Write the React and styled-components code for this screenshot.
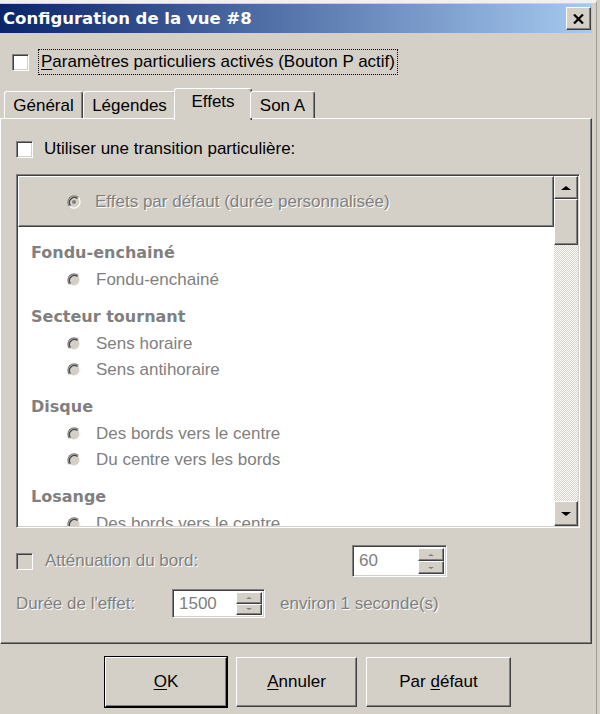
import React from "react"
import styled, { createGlobalStyle } from "styled-components"

const face = "#d4d0c8"
const shade = "#808080"
const dark = "#404040"

const GlobalStyle = createGlobalStyle`
  html, body {
    margin: 0;
    padding: 0;
    background: ${face};
  }
  body {
    font-family: "Liberation Sans", Arial, sans-serif;
    font-size: 17px;
    color: #000;
  }
`

const Window = styled.div`
  width: 597px;
  height: 714px;
  box-sizing: border-box;
  border-top: 3px solid #f1f0ed;
  border-right: 1px solid #a09c94;
  padding-top: 1px;
  background: ${face};
  display: flex;
  flex-direction: column;
  overflow: hidden;
`

const TitleBar = styled.div`
  height: 29px;
  margin-right: 4px;
  padding: 0 1px 0 3px;
  display: flex;
  align-items: center;
  justify-content: space-between;
  background: linear-gradient(to right, #0a246a 0%, #a6caf0 100%);
`

const TitleText = styled.span`
  color: #fff;
  font-family: "DejaVu Sans", Verdana, sans-serif;
  font-weight: bold;
  font-size: 16.5px;
`

const Raised = styled.div`
  box-sizing: border-box;
  background: ${face};
  border-top: 1px solid #fff;
  border-left: 1px solid #fff;
  border-right: 1px solid ${dark};
  border-bottom: 1px solid ${dark};
  box-shadow: inset -1px -1px 0 ${shade};
`

const CloseButton = styled(Raised)`
  width: 25px;
  height: 23px;
  display: flex;
  align-items: center;
  justify-content: center;
`

const TopCheckRow = styled.div`
  display: flex;
  align-items: center;
  gap: 9px;
  height: 26px;
  margin: 16px 0 0 12px;
`

const FocusLabel = styled.span`
  border: 1px dotted #000;
  padding: 0 2px;
  line-height: 24px;
`

const Box = styled.span`
  width: 17px;
  height: 17px;
  flex: none;
  box-sizing: border-box;
  background: ${({ $disabled }) => ($disabled ? face : "#fff")};
  border-top: 1px solid ${shade};
  border-left: 1px solid ${shade};
  border-right: 1px solid #fff;
  border-bottom: 1px solid #fff;
  box-shadow: inset 1px 1px 0 ${dark}, inset -1px -1px 0 ${face};
`

const TabRow = styled.div`
  display: flex;
  align-items: flex-end;
  height: 30px;
  margin: 13px 0 0 4px;
  position: relative;
  z-index: 1;
`

const Tab = styled.div`
  box-sizing: border-box;
  width: ${({ $w }) => $w}px;
  height: ${({ $active }) => ($active ? 32 : 27)}px;
  margin: 0 ${({ $active }) => ($active ? -2 : 0)}px
    ${({ $active }) => ($active ? -2 : 0)}px;
  padding-top: ${({ $active }) => ($active ? 2 : 3)}px;
  text-align: center;
  background: ${face};
  border-top: 1px solid #fff;
  border-left: 1px solid #fff;
  border-right: 1px solid ${dark};
  border-radius: 3px 3px 0 0;
  box-shadow: inset -1px 0 0 ${shade};
  line-height: 22px;
`

const Panel = styled.div`
  width: 592px;
  height: 526px;
  box-sizing: border-box;
  border-top: 1px solid #fff;
  border-left: 1px solid #fff;
  border-right: 1px solid ${dark};
  border-bottom: 1px solid ${dark};
  box-shadow: inset -1px -1px 0 ${shade};
  padding: 19px 0 0 15px;
  display: flex;
  flex-direction: column;
`

const CheckRow = styled.div`
  display: flex;
  align-items: center;
  gap: 11px;
  height: 22px;
`

const ListBox = styled.div`
  width: 564px;
  height: 354px;
  margin-top: 14px;
  box-sizing: border-box;
  background: #fff;
  border-top: 1px solid ${shade};
  border-left: 1px solid ${shade};
  border-right: 1px solid #fff;
  border-bottom: 1px solid #fff;
  box-shadow: inset 1px 1px 0 ${dark}, inset -1px -1px 0 ${face};
  padding: 1px;
  display: flex;
`

const ListContent = styled.div`
  flex: 1;
  overflow: hidden;
`

const DefaultStrip = styled(Raised)`
  height: 51px;
  display: flex;
  align-items: center;
  gap: 14px;
  padding-left: 48px;
`

const Dim = styled.span`
  color: ${shade};
  text-shadow: 1px 1px 0 #fff;
`

const Group = styled.div`
  margin-top: ${({ $first }) => ($first ? 12 : 10)}px;
`

const GroupTitle = styled.div`
  height: 28px;
  line-height: 28px;
  padding-left: 13px;
  font-family: "DejaVu Sans", Verdana, sans-serif;
  font-weight: bold;
  font-size: 16px;
  color: ${shade};
`

const Item = styled.div`
  height: 26px;
  display: flex;
  align-items: center;
  gap: 15px;
  padding-left: 49px;
  color: ${shade};
`

const ScrollBar = styled.div`
  width: 24px;
  display: flex;
  flex-direction: column;
  background: repeating-conic-gradient(${face} 0 25%, #fff 0 50%) 0 0 / 2px 2px;
`

const ArrowButton = styled(Raised)`
  height: ${({ $h }) => $h}px;
  display: flex;
  align-items: center;
  justify-content: center;
`

const Thumb = styled(Raised)`
  height: 46px;
`

const Track = styled.div`
  flex: 1;
`

const Triangle = styled.span`
  width: 0;
  height: 0;
  border-left: ${({ $s }) => $s}px solid transparent;
  border-right: ${({ $s }) => $s}px solid transparent;
  ${({ $up, $s, $c }) =>
    $up
      ? `border-bottom: ${$s - 1}px solid ${$c};`
      : `border-top: ${$s - 1}px solid ${$c};`}
`

const FieldRow = styled.div`
  display: flex;
  align-items: center;
  height: ${({ $h }) => $h}px;
  margin-top: ${({ $mt }) => $mt}px;
`

const FieldLabel = styled.div`
  width: ${({ $w }) => $w}px;
  flex: none;
  display: flex;
  align-items: center;
  gap: 12px;
`

const Spin = styled.div`
  width: ${({ $w }) => $w}px;
  height: 100%;
  box-sizing: border-box;
  background: #fff;
  border-top: 1px solid ${shade};
  border-left: 1px solid ${shade};
  border-right: 1px solid #fff;
  border-bottom: 1px solid #fff;
  box-shadow: inset 1px 1px 0 ${dark}, inset -1px -1px 0 ${face};
  padding: 2px;
  display: flex;
`

const SpinValue = styled.div`
  flex: 1;
  display: flex;
  align-items: center;
  padding-left: 4px;
  color: ${shade};
`

const SpinButtons = styled.div`
  width: 26px;
  display: flex;
  flex-direction: column;
`

const SpinButton = styled(Raised)`
  flex: 1;
  display: flex;
  align-items: center;
  justify-content: center;
`

const Note = styled(Dim)`
  margin-left: 15px;
`

const ButtonRow = styled.div`
  display: flex;
  gap: 9px;
  margin-top: 13px;
  padding-left: 105px;
`

const Button = styled.div`
  width: ${({ $w }) => $w}px;
  height: 50px;
  box-sizing: border-box;
  display: flex;
  align-items: center;
  justify-content: center;
  background: ${face};
  border: 1px solid;
  border-color: #fff ${dark} ${dark} #fff;
  box-shadow: inset -1px -1px 0 ${shade};
  ${({ $default }) =>
    $default &&
    `border-color: #fff #000 #000 #fff; box-shadow: inset -1px -1px 0 ${shade}, 0 0 0 1px #000;`}
`

const Key = styled.span`
  text-decoration: underline;
  text-underline-offset: 2px;
`

function RadioMark({ checked }) {
  return (
    <svg width="14" height="14" viewBox="0 0 14 14" style={{ flex: "none" }}>
      <circle cx="7" cy="7" r="6.3" fill={face} />
      <path d="M11.45 2.55 A6.3 6.3 0 0 0 2.55 11.45" fill="none" stroke={shade} strokeWidth="1.2" />
      <path d="M10.5 3.5 A5 5 0 0 0 3.5 10.5" fill="none" stroke={dark} strokeWidth="1.2" />
      <path d="M11.45 2.55 A6.3 6.3 0 0 1 2.55 11.45" fill="none" stroke="#fff" strokeWidth="1.2" />
      {checked && <circle cx="7" cy="7" r="2" fill={shade} />}
    </svg>
  )
}

const groups = [
  { title: "Fondu-enchainé", items: ["Fondu-enchainé"] },
  { title: "Secteur tournant", items: ["Sens horaire", "Sens antihoraire"] },
  { title: "Disque", items: ["Des bords vers le centre", "Du centre vers les bords"] },
  { title: "Losange", items: ["Des bords vers le centre"] },
]

const tabs = [
  { label: "Général", w: 79 },
  { label: "Légendes", w: 93 },
  { label: "Effets", w: 78, active: true },
  { label: "Son A", w: 65 },
]

function SpinBox({ value, width }) {
  return (
    <Spin $w={width}>
      <SpinValue>{value}</SpinValue>
      <SpinButtons>
        <SpinButton>
          <Triangle $up $s={3} $c={shade} />
        </SpinButton>
        <SpinButton>
          <Triangle $s={3} $c={shade} />
        </SpinButton>
      </SpinButtons>
    </Spin>
  )
}

export default function App() {
  return (
    <>
      <GlobalStyle />
      <Window>
        <TitleBar>
          <TitleText>Configuration de la vue #8</TitleText>
          <CloseButton>
            <svg width="11" height="10" viewBox="0 0 11 10">
              <path d="M1 0.5 L10 9.5 M10 0.5 L1 9.5" stroke="#000" strokeWidth="2.2" />
            </svg>
          </CloseButton>
        </TitleBar>

        <TopCheckRow>
          <Box />
          <FocusLabel>
            <Key>P</Key>aramètres particuliers activés (Bouton P actif)
          </FocusLabel>
        </TopCheckRow>

        <TabRow>
          {tabs.map((t) => (
            <Tab key={t.label} $w={t.w} $active={t.active}>
              {t.label}
            </Tab>
          ))}
        </TabRow>

        <Panel>
          <CheckRow>
            <Box />
            <span>Utiliser une transition particulière:</span>
          </CheckRow>

          <ListBox>
            <ListContent>
              <DefaultStrip>
                <RadioMark checked />
                <Dim>Effets par défaut (durée personnalisée)</Dim>
              </DefaultStrip>
              {groups.map((g, i) => (
                <Group key={g.title} $first={i === 0}>
                  <GroupTitle>{g.title}</GroupTitle>
                  {g.items.map((it) => (
                    <Item key={it}>
                      <RadioMark />
                      {it}
                    </Item>
                  ))}
                </Group>
              ))}
            </ListContent>
            <ScrollBar>
              <ArrowButton $h={23}>
                <Triangle $up $s={5} $c="#000" />
              </ArrowButton>
              <Thumb />
              <Track />
              <ArrowButton $h={25}>
                <Triangle $s={5} $c="#000" />
              </ArrowButton>
            </ScrollBar>
          </ListBox>

          <FieldRow $h={32} $mt={17}>
            <FieldLabel $w={336}>
              <Box $disabled />
              <Dim>Atténuation du bord:</Dim>
            </FieldLabel>
            <SpinBox value="60" width={95} />
          </FieldRow>

          <FieldRow $h={29} $mt={12}>
            <FieldLabel $w={156}>
              <Dim>Durée de l'effet:</Dim>
            </FieldLabel>
            <SpinBox value="1500" width={93} />
            <Note>environ 1 seconde(s)</Note>
          </FieldRow>
        </Panel>

        <ButtonRow>
          <Button $w={122} $default>
            <span>
              <Key>O</Key>K
            </span>
          </Button>
          <Button $w={121}>
            <span>
              <Key>A</Key>nnuler
            </span>
          </Button>
          <Button $w={145}>
            <span>
              Par <Key>d</Key>éfaut
            </span>
          </Button>
        </ButtonRow>
      </Window>
    </>
  )
}
